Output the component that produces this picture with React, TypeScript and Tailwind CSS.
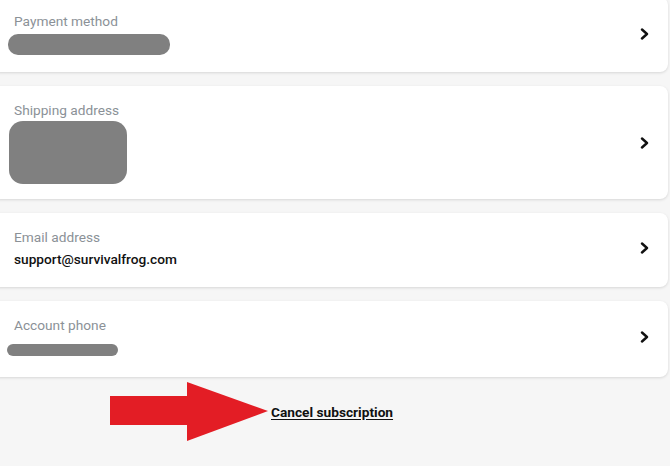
function Chevron() {
  return (
    <svg width="10" height="12" viewBox="0 0 10 12" fill="none" className="shrink-0">
      <polyline points="2,1.5 7,6 2,10.5" stroke="#111" strokeWidth="2.4" strokeLinecap="round" strokeLinejoin="round" />
    </svg>
  );
}

function Card({ label, children, className }: { label: string; children: React.ReactNode; className: string }) {
  return (
    <div className={`flex items-center justify-between bg-white rounded-lg shadow-[0_1px_3px_rgba(0,0,0,0.13)] pl-[22px] pr-[18px] pt-4 ${className}`}>
      <div className="flex flex-col">
        <span className="text-[13.7px] leading-4 text-[#8b9197]">{label}</span>
        {children}
      </div>
      <Chevron />
    </div>
  );
}

export default function App() {
  return (
    <div className="min-h-screen overflow-hidden bg-[#f6f6f6]" style={{ fontFamily: "Roboto, 'Liberation Sans', sans-serif" }}>
      <div className="flex flex-col gap-[14px] -ml-2 mr-[2px] -mt-[3px]">
        <Card label="Payment method" className="pb-[17px]">
          <div className="mt-[5px] -ml-[6px] h-[21px] w-[162px] rounded-[10px] bg-[#808080]" />
        </Card>
        <Card label="Shipping address" className="pb-[15px]">
          <div className="mt-[3px] -ml-[5px] h-[63px] w-[118px] rounded-[14px] bg-[#808080]" />
        </Card>
        <Card label="Email address" className="pb-5">
          <span className="mt-[6px] text-[13.7px] leading-4 font-medium text-[#111]">support@survivalfrog.com</span>
        </Card>
        <Card label="Account phone" className="pb-[21px]">
          <div className="mt-[11px] -ml-[7px] h-[12px] w-[111px] rounded-[6px] bg-[#808080]" />
        </Card>
      </div>
      <div className="flex items-center gap-[3px] ml-[110px] mt-[5px]">
        <svg width="158" height="59" viewBox="0 0 158 59" className="shrink-0">
          <rect x="0" y="14" width="78" height="29" fill="#e31d25" />
          <polygon points="77,0 158,29 77,59" fill="#e31d25" />
        </svg>
        <a href="#" className="text-[13.7px] leading-4 font-bold text-[#111] underline underline-offset-2">Cancel subscription</a>
      </div>
    </div>
  );
}
